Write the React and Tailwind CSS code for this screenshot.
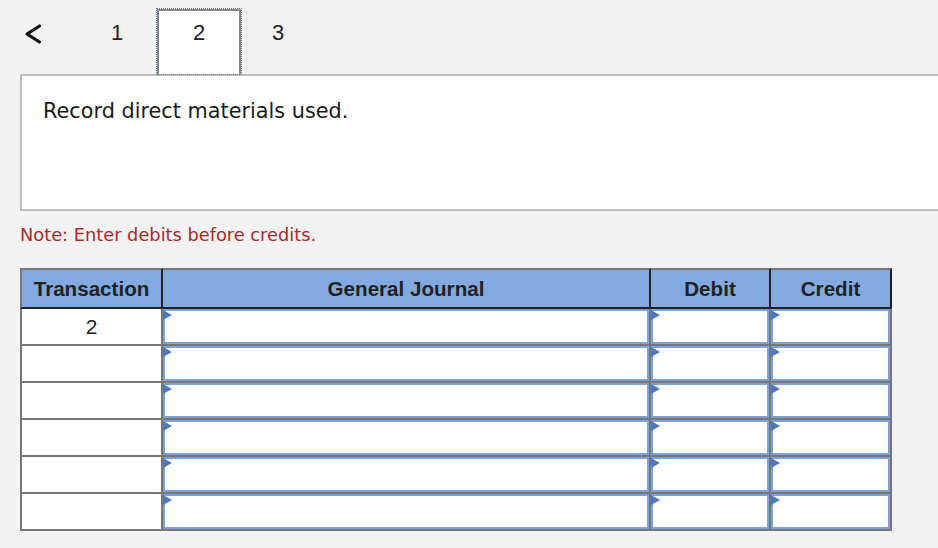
import React from "react";

const rows = ["2", "", "", "", "", ""];

const Flag = () => (
  <svg
    width="9"
    height="10"
    viewBox="0 0 9 10"
    className="absolute -left-[2px] -top-[1px]"
  >
    <polygon points="0,0 9,5 0,10" fill="#4a78c2" />
  </svg>
);

const EntryBox = () => (
  <div className="relative h-full w-full border-2 border-[#7ba1d8] bg-white">
    <Flag />
  </div>
);

export default function App() {
  return (
    <div className="min-h-screen overflow-hidden bg-[#f2f2f2] pl-[20px] pt-[9px] font-['Liberation_Sans',Arial,sans-serif] text-[#222]">
      {/* step tabs */}
      <div className="flex h-[65px] items-start">
        <div className="w-[58px] pt-[13px]">
          <svg width="20" height="24" viewBox="0 0 20 24" className="ml-[4px]">
            <polyline
              points="15.5,4 3,12 15.5,20"
              fill="none"
              stroke="#111"
              strokeWidth="3.2"
              strokeLinecap="round"
              strokeLinejoin="round"
            />
          </svg>
        </div>
        <div className="w-[78px] pt-[12px] text-center text-[22px] leading-[24px]">1</div>
        <div className="relative z-10 ml-[1px] h-[65px] w-[84px] border-x-2 border-t-2 border-[#868686] bg-white pt-[10px] text-center text-[22px] leading-[24px] outline-1 outline-dotted outline-[#4a7bc4]">
          2
        </div>
        <div className="w-[74px] pt-[12px] text-center text-[22px] leading-[24px]">3</div>
      </div>

      {/* question */}
      <div className="h-[137px] w-[940px] border-2 border-[#bdbdbd] bg-white pl-[21px] pt-[22px] font-['DejaVu_Sans',Verdana,sans-serif] text-[20.8px] leading-[26px] text-[#1a1a1a]">
        Record direct materials used.
      </div>

      <p className="mt-[12px] font-['DejaVu_Sans',Verdana,sans-serif] text-[17.8px] leading-[24px] text-[#a82a2a]">
        Note: Enter debits before credits.
      </p>

      {/* journal grid */}
      <div className="mt-[21px] w-[872px]">
        <div className="flex h-[41px] bg-[#82aae0] text-[20.6px] font-bold leading-[37px]">
          <div className="w-[143px] border-2 border-l-[#777] border-t-[#777] border-r-[#222] border-b-[#222] text-center">
            Transaction
          </div>
          <div className="w-[488px] border-b-2 border-r-2 border-t-2 border-b-[#222] border-r-[#222] border-t-[#777] text-center">
            General Journal
          </div>
          <div className="w-[120px] border-b-2 border-r-2 border-t-2 border-b-[#222] border-r-[#222] border-t-[#777] text-center">
            Debit
          </div>
          <div className="w-[121px] border-b-2 border-r-2 border-t-2 border-b-[#222] border-r-[#222] border-t-[#777] text-center">
            Credit
          </div>
        </div>

        {rows.map((txn, i) => (
          <div key={i} className="flex h-[37px]">
            <div className="w-[143px] border-x-2 border-b-2 border-[#777] bg-white text-center text-[21px] leading-[35px]">
              {txn}
            </div>
            <div className="w-[488px] border-b-2 border-r-2 border-[#777] bg-[#777]">
              <EntryBox />
            </div>
            <div className="w-[120px] border-b-2 border-r-2 border-[#777] bg-[#777]">
              <EntryBox />
            </div>
            <div className="w-[121px] border-b-2 border-r-2 border-[#777] bg-[#777]">
              <EntryBox />
            </div>
          </div>
        ))}
      </div>
    </div>
  );
}
